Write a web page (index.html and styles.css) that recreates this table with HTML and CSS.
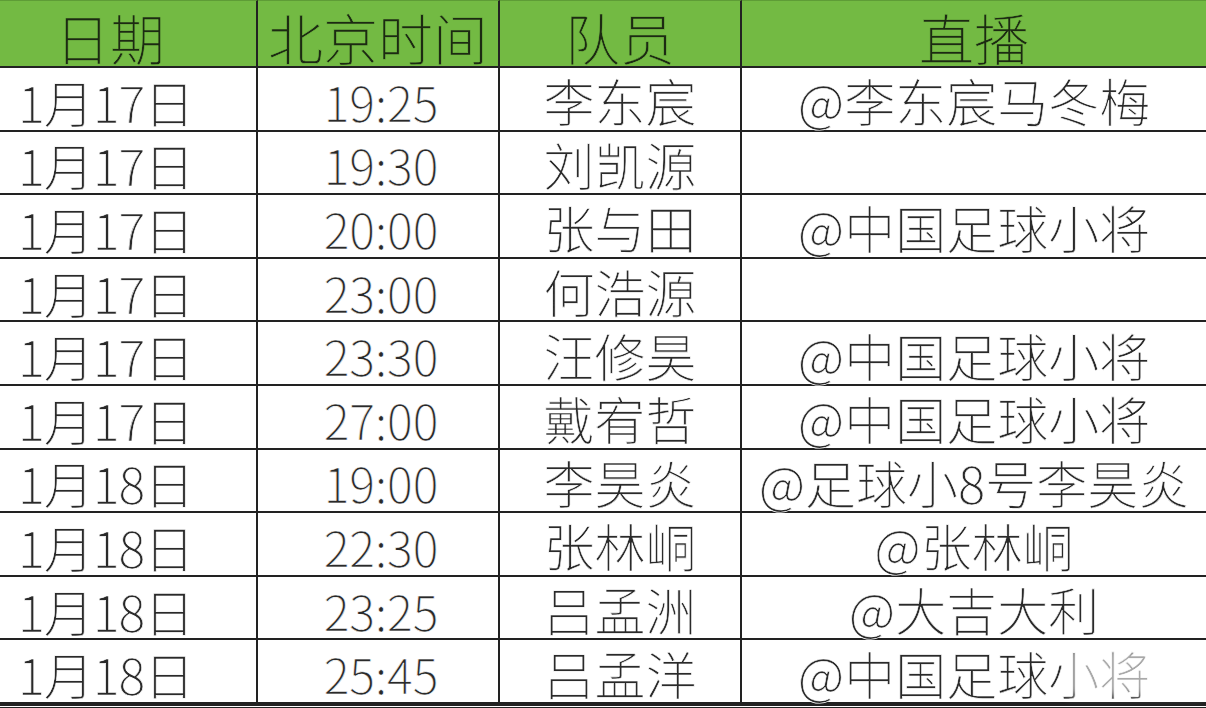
FILE: index.html
```html
<!DOCTYPE html>
<html lang="zh-CN">
<head>
<meta charset="utf-8">
<title>直播时间表</title>
<link rel="stylesheet" href="styles.css">
</head>
<body>
<div class="sheet">
  <div class="cell head head-date">日期</div>
  <div class="cell head">北京时间</div>
  <div class="cell head">队员</div>
  <div class="cell head last">直播</div>

  <div class="cell date">1月17日</div><div class="cell time">19:25</div><div class="cell name">李东宸</div><div class="cell live last">@李东宸马冬梅</div>
  <div class="cell date">1月17日</div><div class="cell time">19:30</div><div class="cell name">刘凯源</div><div class="cell live last"></div>
  <div class="cell date">1月17日</div><div class="cell time">20:00</div><div class="cell name">张与田</div><div class="cell live last">@中国足球小将</div>
  <div class="cell date">1月17日</div><div class="cell time">23:00</div><div class="cell name">何浩源</div><div class="cell live last"></div>
  <div class="cell date">1月17日</div><div class="cell time">23:30</div><div class="cell name">汪修昊</div><div class="cell live last">@中国足球小将</div>
  <div class="cell date">1月17日</div><div class="cell time">27:00</div><div class="cell name">戴宥哲</div><div class="cell live last">@中国足球小将</div>
  <div class="cell date">1月18日</div><div class="cell time">19:00</div><div class="cell name">李昊炎</div><div class="cell live last">@足球小8号李昊炎</div>
  <div class="cell date">1月18日</div><div class="cell time">22:30</div><div class="cell name">张林峒</div><div class="cell live last">@张林峒</div>
  <div class="cell date">1月18日</div><div class="cell time">23:25</div><div class="cell name">吕孟洲</div><div class="cell live last">@大吉大利</div>
  <div class="cell date">1月18日</div><div class="cell time">25:45</div><div class="cell name">吕孟洋</div><div class="cell live last wm-host">@中国足球小将<span class="watermark"></span></div>
</div>
</body>
</html>
```

FILE: styles.css
```css
html, body {
  margin: 0;
  padding: 0;
  background: #ffffff;
}

body {
  font-family: "Noto Sans CJK SC", "Noto Sans", sans-serif;
  color: #2a2a2a;
}

.sheet {
  display: grid;
  grid-template-columns: 258px 242px 242px 1fr;
  grid-template-rows: 68px repeat(10, 63.6px);
  width: 1206px;
  border-bottom: 5px double #222222;
  box-sizing: border-box;
}

.cell {
  display: flex;
  align-items: center;
  justify-content: center;
  border-right: 2px solid #222222;
  border-bottom: 2px solid #222222;
  font-size: 51px;
  font-weight: 300;
  line-height: 1;
  padding-top: 4px;
  box-sizing: border-box;
  white-space: nowrap;
  -webkit-text-stroke: 0.6px #ffffff;
}

.cell.last {
  border-right: none;
}

.head {
  background: #73ba43;
  border-top: 1px solid #5e9c36;
  color: #1c2a12;
  font-size: 55px;
  padding-top: 5px;
  -webkit-text-stroke: 0.6px #73ba43;
}

.head-date {
  padding-right: 36px;
}

.date {
  justify-content: flex-start;
  padding-left: 18px;
  font-size: 50px;
  letter-spacing: -1px;
}

.time {
  font-size: 48px;
  padding-left: 6px;
}

.wm-host {
  position: relative;
}

.watermark {
  position: absolute;
  left: 325px;
  top: 8px;
  width: 135px;
  height: 48px;
  background: rgba(255, 255, 255, 0.6);
  filter: blur(4px);
}
```
